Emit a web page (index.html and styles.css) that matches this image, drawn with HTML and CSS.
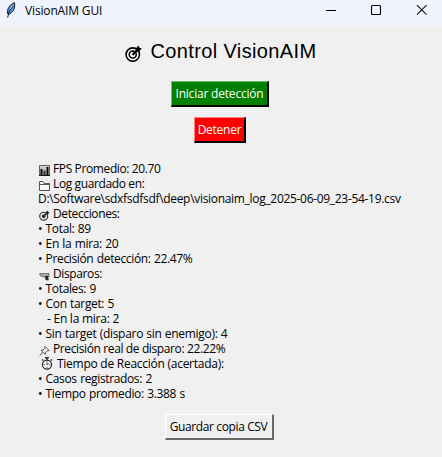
FILE: index.html
```html
<!DOCTYPE html>
<html lang="es">
<head>
<meta charset="utf-8">
<title>VisionAIM GUI</title>
<link rel="stylesheet" href="styles.css">
</head>
<body>
<svg class="defs" aria-hidden="true">
  <symbol id="target" viewBox="0 0 16 16">
    <circle cx="7.3" cy="9" r="6.3" fill="#fff" stroke="#000" stroke-width="1.5"/>
    <circle cx="7.3" cy="9" r="3.3" fill="none" stroke="#000" stroke-width="1.5"/>
    <path d="M7 9.3 12 4.4" stroke="#000" stroke-width="2"/>
    <path d="M10 6.200 10.200 3 13 .5 13.500 2.500 15.800 3.300 13.200 6Z" fill="#000"/>
  </symbol>
</svg>
<header class="titlebar">
  <svg class="feather" viewBox="0 0 10 16"><path d="M1.5 11.5C1 7.500 3 3 8.300.7 9.400 4 8.500 9 3.500 12Z" fill="#4f9af0" stroke="#101820" stroke-width="1"/><path d="M7 3.500 3 10 1.700 15.500" fill="none" stroke="#0b1520" stroke-width="1"/><path d="M6.700 2.800 4 7.500" stroke="#a9d2ff" stroke-width="1"/></svg>
  <span class="name">VisionAIM GUI</span>
  <svg class="controls" viewBox="0 0 102 12"><path d="M0 6.500H10" stroke="#000"/><rect x="45.500" y="1.500" width="9" height="9" rx="1" fill="none" stroke="#000" stroke-width="1.100"/><path d="M91 1.200 100.500 10.700M100.500 1.200 91 10.700" stroke="#111" stroke-width="1.100"/></svg>
</header>
<main>
  <h1><svg class="big"><use href="#target"/></svg><span>Control VisionAIM</span></h1>
  <button class="start">Iniciar detección</button>
  <button class="stop">Detener</button>
  <div class="stats">
    <p><svg class="icon" viewBox="0 0 11 11"><path d="M.5.5H10.500V10.500H.5Z" fill="#ccc" stroke="#666"/><path d="M2.500 4V10M8.500 2V10" stroke="#000" stroke-width="2"/><path d="M5.500 5.500V10" stroke="#222" stroke-width="2"/><path d="M0 10.500H11" stroke="#111"/></svg><span>FPS Promedio: 20.70</span></p>
    <p><svg class="icon" viewBox="0 0 11 11"><path d="M.5 10.500V1.500H4L5 3.500H10.500V10.500ZM.5 4.500H10" fill="#f8f8f8" stroke="#444" stroke-width=".9"/></svg><span>Log guardado en:</span></p>
    <p><span class="path">D:\Software\sdxfsdfsdf\deep\visionaim_log_2025-06-09_23-54-19.csv</span></p>
    <p><svg class="icon small" viewBox="0 0 11 11"><circle cx="4.700" cy="6.300" r="4" fill="#ddd" stroke="#333" stroke-width="1.100"/><circle cx="4.700" cy="6.300" r="1.700" fill="#222"/><path d="M5 6 8.500 2.500" stroke="#111" stroke-width="1.300"/><path d="M6.800 4.200 7 2 8.800.5 9.200 2 10.500 2.500 9 4.300Z" fill="#222"/></svg><span>Detecciones:</span></p>
    <p class="item"><span>• Total: 89</span></p>
    <p class="item"><span>• En la mira: 20</span></p>
    <p class="item"><span>• Precisión detección: 22.47%</span></p>
    <p><svg class="icon" viewBox="0 0 11 11"><path d="M.7 3.500H10V7H8.500L9.500 10H7L6.300 7.200 1 5.700Z" fill="#aaa" stroke="#555" stroke-width=".7"/><path d="M6 6H9.200V10H7Z" fill="#222"/></svg><span>Disparos:</span></p>
    <p class="item"><span>• Totales: 9</span></p>
    <p class="item"><span>• Con target: 5</span></p>
    <p class="sub"><span>- En la mira: 2</span></p>
    <p class="item wide"><span>• Sin target (disparo sin enemigo): 4</span></p>
    <p><svg class="icon" viewBox="0 0 11 11"><path d="M6 1.500 10 5.500 8.500 5.800 6.500 7.500 6.300 9.500 2 5.200 4 5 6 3ZM4 7.300.5 10.700" fill="#eee" stroke="#444" stroke-width=".9"/></svg><span>Precisión real de disparo: 22.22%</span></p>
    <p class="reaction"><svg class="icon watch" viewBox="0 0 11 12"><circle cx="5.500" cy="7" r="4.200" fill="#f4f4f4" stroke="#222" stroke-width="1.100"/><path d="M3.800.7H7.200M5.500 1V3M1 2.300 2 3.300M10 2.300 9 3.300" stroke="#222" stroke-width="1.200"/><path d="M5.500 4.200V7.200L7 6M5.500 9V10M2.500 7H3.500M7.700 7H8.500" fill="none" stroke="#444" stroke-width=".8"/></svg><span>Tiempo de Reacción (acertada):</span></p>
    <p class="item"><span>• Casos registrados: 2</span></p>
    <p class="item"><span>• Tiempo promedio: 3.388 s</span></p>
  </div>
  <button class="save">Guardar copia CSV</button>
</main>
</body>
</html>
```
FILE: styles.css
```css
* { box-sizing: border-box; }
body { margin: 0; width: 442px; height: 457px; overflow: hidden; background: #f0f0f0; color: #000; font: 12px/15px "Open Sans", "Noto Sans", sans-serif; letter-spacing: -.38px; }
.defs { display: none; }
.titlebar { height: 26px; background: #eff3fb; display: flex; align-items: flex-start; padding: 2px 14px 0 6px; }
.feather { width: 10px; height: 16px; }
.name { margin: 1px 0 0 9px; letter-spacing: -.15px; }
.controls { width: 102px; height: 12px; margin: 2px 0 0 auto; }
main { display: flex; flex-direction: column; align-items: center; padding-right: 2px; }
h1 { margin: 13px 0 0 2px; height: 24px; display: flex; font: 20px/24px "Liberation Sans", Arial, sans-serif; letter-spacing: .38px; }
.big { width: 17px; height: 17px; margin: 6px 8px 0 0; }
button { font: inherit; letter-spacing: inherit; padding: 0; height: 26px; border: 2px solid; white-space: nowrap; }
.start, .stop { color: #fff; border-width: 1px 2px 2px 1px; }
.start { width: 98px; margin-top: 18px; background: #008000; border-color: #6cc06c #000 #000 #6cc06c; letter-spacing: -.2px; }
.stop { width: 52px; margin-top: 10px; background: #f00; border-color: #ff8080 #000 #000 #ff8080; letter-spacing: -.25px; }
.stats { width: 364px; margin-top: 18px; }
.stats p { margin: 0; height: 15px; display: flex; white-space: pre; }
.stats .path { letter-spacing: -.31px; }
.stats .item { letter-spacing: -.36px; word-spacing: .7px; }
.stats .wide { letter-spacing: -.29px; word-spacing: .4px; }
.stats .reaction { letter-spacing: -.26px; }
.icon { width: 11px; height: 11px; margin: 4px 3px 0 1px; flex: none; }
.watch { width: 12px; height: 13px; margin: 1px 4px 0 3px; }
.stats .sub { padding-left: 9px; letter-spacing: -.25px; }
.save { width: 109px; margin: 13px 2px 0 0; background: #f0f0f0; border-width: 1px 2px 2px 1px; border-color: #fff #696969 #696969 #fff; }
```
